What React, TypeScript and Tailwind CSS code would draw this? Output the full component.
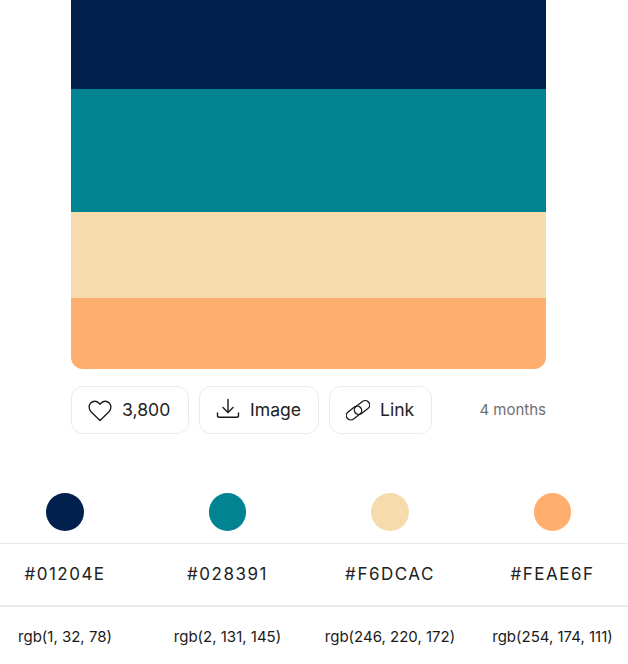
import React from "react";

const colors = [
  { hex: "#01204E", rgb: "rgb(1, 32, 78)", bg: "bg-[#01204E]" },
  { hex: "#028391", rgb: "rgb(2, 131, 145)", bg: "bg-[#028391]" },
  { hex: "#F6DCAC", rgb: "rgb(246, 220, 172)", bg: "bg-[#F6DCAC]" },
  { hex: "#FEAE6F", rgb: "rgb(254, 174, 111)", bg: "bg-[#FEAE6F]" },
];

const HeartIcon = () => (
  <svg width="24" height="24" viewBox="0 0 24 24" fill="none" stroke="#1a1a1a" strokeWidth="1.3" strokeLinejoin="round">
    <path d="M12 22.500 3 13.700C.6 11.300.5 7.300 2.700 5 5 2.600 8.700 2.700 10.800 5L12 6.300 13.200 5C15.300 2.700 19 2.600 21.300 5 23.500 7.300 23.400 11.300 21 13.700Z" />
  </svg>
);

const DownloadIcon = () => (
  <svg width="24" height="24" viewBox="0 0 24 24" fill="none" stroke="#1a1a1a" strokeWidth="1.4" strokeLinecap="round" strokeLinejoin="round">
    <path d="M12 1.500V14" />
    <path d="M7 9.500 12 14.500 17 9.500" />
    <path d="M1.500 15V17.500C1.500 18.600 2.200 19.300 3.300 19.300H20.700C21.800 19.300 22.500 18.600 22.500 17.500V15" />
  </svg>
);

const LinkIcon = () => (
  <svg width="24" height="24" viewBox="0 0 24 24" fill="none" stroke="#1a1a1a" strokeWidth="1.300">
    <rect x="-0.500" y="10.500" width="17" height="9" rx="4.500" transform="rotate(-38 8 15)" />
    <rect x="7.500" y="5" width="17" height="9" rx="4.500" transform="rotate(-38 16 9.500)" />
  </svg>
);

const ActionButton = ({ icon, label, className }: { icon: React.ReactNode; label: string; className: string }) => (
  <button className={`flex items-center pl-4 gap-2.5 h-12 rounded-xl border border-[#ebebeb] bg-white text-[17.6px] text-[#222222] ${className}`}>
    {icon}
    <span>{label}</span>
  </button>
);

export default function App() {
  return (
    <div className="w-[628px] h-[664px] overflow-hidden bg-white font-['Inter',sans-serif]">
      <div className="mx-[71px] w-[475px] flex flex-col rounded-b-xl overflow-hidden">
        <div className="h-[89px] bg-[#01204E]" />
        <div className="h-[123px] bg-[#028391]" />
        <div className="h-[86px] bg-[#F6DCAC]" />
        <div className="h-[71px] bg-[#FEAE6F]" />
      </div>

      <div className="mx-[71px] w-[475px] mt-[17px] flex items-center gap-[10px]">
        <ActionButton icon={<HeartIcon />} label="3,800" className="w-[118px]" />
        <ActionButton icon={<DownloadIcon />} label="Image" className="w-[120px]" />
        <ActionButton icon={<LinkIcon />} label="Link" className="w-[103px]" />
        <span className="ml-auto text-[15px] text-[#6f6f6f]">4 months</span>
      </div>

      <div className="mt-[59px] w-[650px] -ml-[16.250px]">
        <div className="grid grid-cols-4 h-[51px] border-b border-[#e8e8e8]">
          {colors.map((c) => (
            <div key={c.hex} className="flex justify-center">
              <div className={`w-[37.500px] h-[38px] rounded-full ${c.bg}`} />
            </div>
          ))}
        </div>
        <div className="grid grid-cols-4 h-[63px] border-b-2 border-[#ebebeb]">
          {colors.map((c) => (
            <div key={c.hex} className="flex items-center justify-center text-[17px] tracking-[1.500px] text-[#222222]">
              {c.hex}
            </div>
          ))}
        </div>
        <div className="grid grid-cols-4 h-[60px]">
          {colors.map((c) => (
            <div key={c.hex} className="flex items-center justify-center text-[15px] text-[#1a1a1a]">
              {c.rgb}
            </div>
          ))}
        </div>
      </div>
    </div>
  );
}
